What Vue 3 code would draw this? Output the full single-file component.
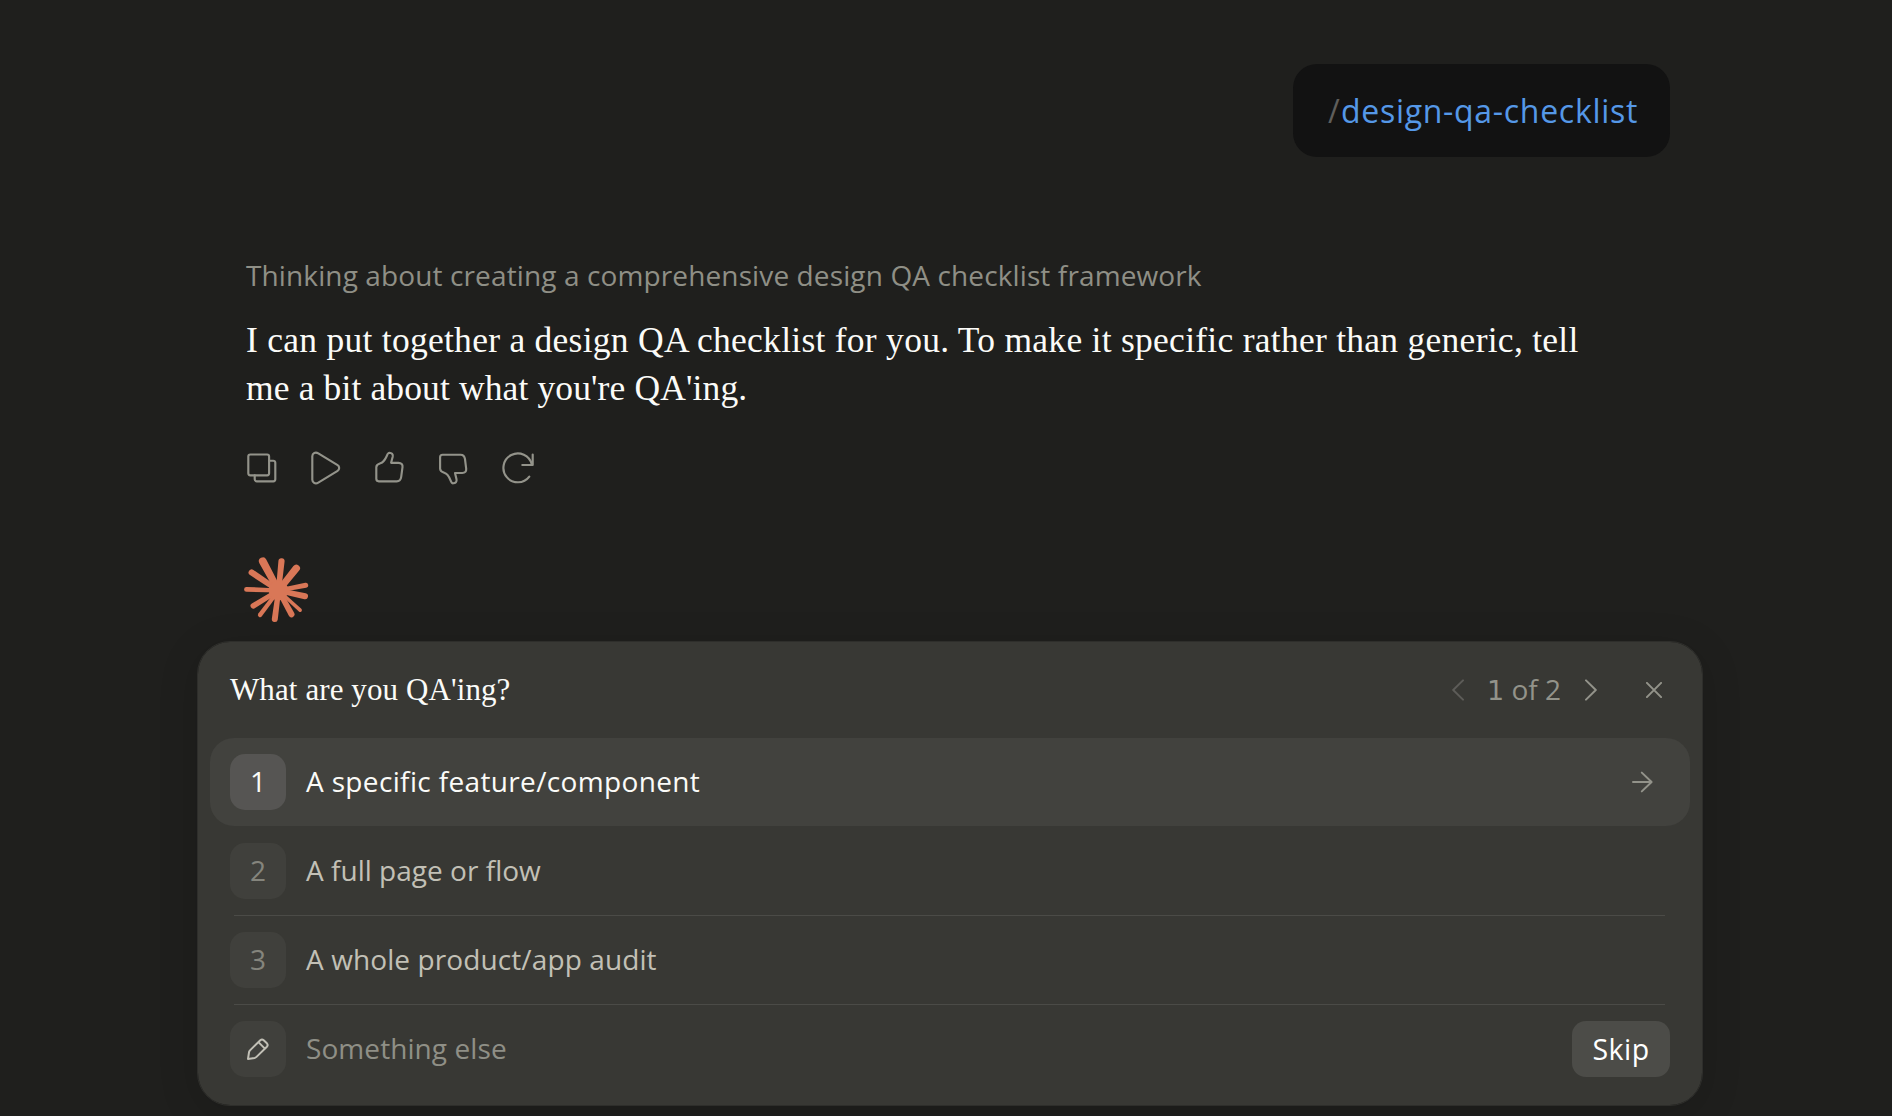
<script setup>
const options = [
  { n: 1, label: 'A specific feature/component', cls: 'o1' },
  { n: 2, label: 'A full page or flow', cls: 'o2' },
  { n: 3, label: 'A whole product/app audit', cls: 'o3' },
]
const selected = 1
// Each ray: tip x, tip y, tip half-width.
const rays = [
  [-15.7, -29.2, 3.9], [3, -29.2, 3.1], [17.8, -22.2, 3.7], [27.2, -5.3, 2.5], [26.5, 5.8, 3],
  [21.6, 19.7, 1.8], [13, 23.8, 3], [-3.7, 28.6, 3], [-18.4, 24.4, 2.2], [-25.2, 15.3, 2.8],
  [-32, -1.2, 2.4], [-26.8, -18, 3.1],
].map(([x, y, w]) => {
  const d = Math.hypot(x, y)
  const nx = -y / d
  const ny = x / d
  const b = w * 0.85
  return `M${nx * b} ${ny * b}L${x + nx * w} ${y + ny * w}A${w} ${w} 0 0 0 ${x - nx * w} ${y - ny * w}L${-nx * b} ${-ny * b}Z`
})
</script>

<template>
  <main class="page">
    <section class="thread">
      <div class="bubble"><span class="slash">/</span><span class="cmd">design-qa-checklist</span></div>
      <p class="thinking">Thinking about creating a comprehensive design QA checklist framework</p>
      <p class="answer">
        <span class="l1">I can put together a design QA checklist for you. To make it specific rather than generic, tell</span><br>
        <span class="l2">me a bit about what you're QA'ing.</span>
      </p>
      <div class="actions">
        <svg viewBox="0 0 40 40"><rect x="6.3" y="6.5" width="20.8" height="20.8" rx="2"/><path d="M27.2 12.7h4.1a2 2 0 0 1 2 2v16.6a2 2 0 0 1-2 2H14.7a2 2 0 0 1-2-2v-4"/></svg>
        <svg viewBox="0 0 40 40"><path d="M6.3 8.2C6.3 5.1 9.6 3.7 12.3 5.4L31.6 17.2C33.7 18.5 33.7 21.5 31.6 22.8L12.3 34.6C9.6 36.3 6.3 34.9 6.3 31.8Z"/></svg>
        <svg viewBox="0 0 40 40"><path d="M6.3 19.2C6.3 16.6 8.2 16 10.4 15.3C14 14.2 15.2 11.5 16.7 8.2C17.4 6.3 17.8 4.7 19.4 4.7C21.6 4.9 23.3 6.2 22.7 8.8L21.1 14.8H28.5C31.3 14.8 32.9 16.6 32.5 19.2L31.2 28.8C30.8 31.6 29.4 33.3 26.8 33.3H8.8C7.3 33.3 6.3 32.3 6.3 30.8Z"/></svg>
        <svg viewBox="0 0 40 40"><path d="M6.1 20.8C6.1 23.4 8 24 10.2 24.7C13.8 25.8 15 28.5 16.3 31.8C17 33.7 17.6 35.3 19.2 35.3C21.4 35.1 23.1 33.8 22.5 31.2L21 25H28.3C31.1 25 32.4 23.4 32.2 20.8L31 11.2C30.6 8.4 29.2 6.7 26.6 6.7H8.6C7.1 6.7 6.1 7.7 6.1 9.2Z"/></svg>
        <svg viewBox="0 0 40 40"><path d="M34.7 6.6V17H24.3"/><path d="M33.8 16.4A14.4 14.4 0 1 0 31.3 28.6"/></svg>
      </div>
      <svg class="spark" viewBox="-34.5 -34.5 69 69">
        <path v-for="(d, i) in rays" :key="i" :d="d"/>
        <circle r="9.8"/>
      </svg>
    </section>

    <section class="panel">
      <header class="head">
        <h2>What are you QA'ing?</h2>
        <svg class="prev" width="12" height="22" viewBox="0 0 12 22"><path d="M11 1.4 1.2 11 11 20.6"/></svg>
        <span class="count"><b>1</b> of 2</span>
        <svg class="next" width="12" height="22" viewBox="0 0 12 22"><path d="M1 1.4 10.8 11 1 20.6"/></svg>
        <svg class="close" width="16" height="16" viewBox="0 0 16 16"><path d="M.9.9 15.1 15.1M15.1.9.9 15.1"/></svg>
      </header>
      <div v-for="o in options" :key="o.n" class="row" :class="{ on: o.n === selected }">
        <span class="num"><span>{{ o.n }}</span></span>
        <span class="label" :class="o.cls">{{ o.label }}</span>
        <svg v-if="o.n === selected" class="go" width="22" height="22" viewBox="0 0 22 22"><path d="M1 11H19.4M9.8 1.6 19.6 11 9.8 20.4"/></svg>
      </div>
      <div class="row last">
        <span class="num pen"><svg width="56" height="56" viewBox="0 0 56 56"><path d="M18 37.9 19 31.3Q19.2 30.2 20 29.4L30.3 19.2Q32 17.7 33.7 19.2L36.9 22.3Q38.4 24 36.9 25.7L26.5 35.9Q25.7 36.7 24.6 36.9ZM28.4 21.1 34.9 27.6"/></svg></span>
        <span class="label else">Something else</span>
        <button class="skip">Skip</button>
      </div>
    </section>
  </main>
</template>

<style>
body { margin: 0; background: #1f1f1d; }
</style>

<style scoped>
.page { height: 1116px; overflow: hidden; background: #1f1f1d; font-family: "Open Sans", sans-serif; font-size: 28px; display: flex; flex-direction: column; align-items: center; }
.thread { width: 1436px; margin-left: 12px; box-sizing: border-box; padding-top: 64px; height: 641px; display: flex; flex-direction: column; align-items: flex-start; flex: none; }
.bubble { align-self: flex-end; width: 377px; height: 93px; box-sizing: border-box; border-radius: 24px; background: #121212; display: flex; align-items: center; padding-left: 35px; font-size: 32px; white-space: nowrap; line-height: 44px; }
.slash { color: #5f5e5b; width: 13px; }
.cmd { color: #5598e7; letter-spacing: .7px; }
.thinking { margin: 98px 0 0 12px; line-height: 40px; color: #8f8f86; white-space: nowrap; letter-spacing: .12px; }
.answer { margin: 21px 0 0 12px; font-family: "Liberation Serif", serif; font-size: 35.5px; line-height: 48px; color: #fbfbf8; white-space: nowrap; font-feature-settings: "liga" 1; }
.l1 { letter-spacing: .27px; }
.l2 { letter-spacing: .13px; }
.actions { margin: 36px 0 0 8px; display: flex; gap: 24px; }
.actions svg { width: 40px; height: 40px; display: block; stroke-width: 2.15; }
svg { fill: none; stroke: #93938a; stroke-width: 2; stroke-linecap: round; stroke-linejoin: round; flex: none; }
.spark { width: 69px; height: 69px; margin: 68px 0 0 10px; display: block; fill: #d97757; stroke: none; }
.panel { width: 1506px; height: 465px; box-sizing: border-box; flex: none; margin-left: 8px; border: 1px solid #2e2e2b; border-radius: 33px; background: #383834; background-clip: padding-box; padding: 0 12px; box-shadow: 0 8px 40px rgba(0, 0, 0, .14); }
.head { height: 96px; padding: 0 28px 0 20px; display: flex; align-items: center; box-sizing: border-box; }
h2 { margin: 0; flex: 1; font: 400 31px/40px "Liberation Serif", serif; color: #fbfbf8; letter-spacing: .1px; }
.head svg { stroke: #93938a; }
.head .prev { stroke: #5d5c58; }
.count { color: #93938a; margin: 0 24px 0 23px; line-height: 40px; }
.count b { font-family: "DejaVu Sans", sans-serif; font-weight: 400; font-size: 27px; }
.head .close { margin-left: 49px; }
.row { position: relative; height: 88px; margin-bottom: 1px; padding: 0 20px; display: flex; align-items: center; color: #c2c0b6; border-radius: 24px; }
.row.on { background: #42423e; color: #fbfbf8; }
.row:not(.on):not(.last)::after { content: ""; position: absolute; left: 24px; right: 25px; bottom: -1px; height: 1px; background: #4b4b47; }
.num { width: 56px; height: 56px; border-radius: 15px; background: #40403c; color: #85857d; display: flex; align-items: center; justify-content: center; margin-right: 20px; flex: none; }
.num > span { margin-bottom: 2px; }
.on .num { background: #565553; color: #fbfbf8; }
.label { flex: 1; white-space: nowrap; line-height: 40px; margin-bottom: 2px; }
.o1 { letter-spacing: .35px; }
.o2 { letter-spacing: .02px; }
.o3 { letter-spacing: .1px; }
.go { margin-right: 16px; }
.pen svg { stroke: #c2c0b6; }
.else { color: #8f8f86; letter-spacing: .08px; }
.skip { width: 98px; height: 56px; border: 0; padding: 0; border-radius: 14px; background: #4c4c48; color: #fff; font: 500 28.5px/40px "Open Sans", sans-serif; letter-spacing: .5px; }
</style>
